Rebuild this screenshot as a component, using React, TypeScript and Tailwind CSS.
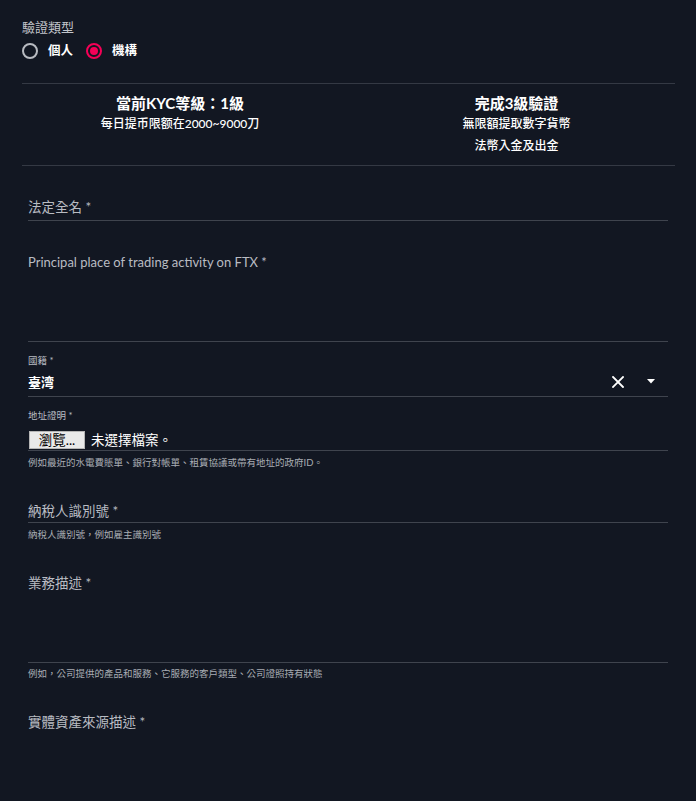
import React from "react";

const FONT = "font-['Lato','Noto_Sans_CJK_TC',sans-serif]";

function Radio({ checked, label }: { checked: boolean; label: string }) {
  return (
    <div className="flex items-center">
      <span
        className={
          "flex h-[16px] w-[16px] items-center justify-center rounded-full border-2 " +
          (checked ? "border-[#f50057]" : "border-[#b8bbc1]")
        }
      >
        {checked && <span className="h-[8px] w-[8px] rounded-full bg-[#f50057]" />}
      </span>
      <span className="ml-[10px] text-[12.5px] font-bold leading-[20px] text-white">{label}</span>
    </div>
  );
}

export default function App() {
  return (
    <div className={"min-h-[801px] w-[696px] bg-[#121722] pb-[60px] " + FONT}>
      {/* top section */}
      <div className="pl-[22px] pr-[21px] pt-[19px]">
        <div className="text-[13px] leading-[16px] text-[#c3c6cc]">驗證類型</div>
        <div className="mt-[6px] flex h-[20px] items-center gap-[13px]">
          <Radio checked={false} label="個人" />
          <Radio checked={true} label="機構" />
        </div>
        <div className="mt-[22px] border-t border-[#343944]" />
        <div className="flex items-start pb-[8px] pt-[10px] text-white">
          <div className="flex w-[316px] flex-col items-center">
            <div className="text-[15px] font-bold leading-[19px]">當前KYC等級：1級</div>
            <div className="text-[12px] font-medium leading-[22px]">每日提币限额在2000~9000刀</div>
          </div>
          <div className="flex flex-1 flex-col items-center pl-[20px]">
            <div className="text-[15px] font-bold leading-[19px]">完成3級驗證</div>
            <div className="text-[12px] font-medium leading-[22px]">無限額提取數字貨幣</div>
            <div className="text-[12px] font-medium leading-[22px]">法幣入金及出金</div>
          </div>
        </div>
        <div className="border-t border-[#343944]" />
      </div>

      {/* form */}
      <div className="mx-[28px]">
        <div className="mt-[31px] border-b border-[#3f444e] pb-[3px]">
          <div className="text-[13.5px] leading-[20px] text-[#b9bcc2]">法定全名 *</div>
        </div>

        <div className="mt-[31px] h-[90px] border-b border-[#3f444e]">
          <div className="text-[13px] leading-[20px] text-[#b9bcc2]">
            Principal place of trading activity on FTX *
          </div>
        </div>

        <div className="mt-[13px] text-[9.5px] leading-[12px] text-[#b9bcc2]">國籍 *</div>
        <div className="mt-[6px] box-border flex h-[24px] items-center border-b border-[#3f444e] pb-[6px] text-white">
          <div className="flex-1 text-[13px] font-bold leading-[18px]">臺湾</div>
          <svg width="12" height="12" viewBox="0 0 12 12" className="mr-[23px]">
            <path d="M1 1 L11 11 M11 1 L1 11" stroke="white" strokeWidth="1.8" strokeLinecap="square" />
          </svg>
          <svg width="8" height="5" viewBox="0 0 8 5" className="mr-[13px]">
            <path d="M0 0 L8 0 L4 4.5 Z" fill="white" />
          </svg>
        </div>

        <div className="mt-[13px] text-[9.5px] leading-[12px] text-[#b9bcc2]">地址證明 *</div>
        <div className="mt-[9px] flex h-[20px] items-start border-b border-[#3f444e]">
          <div className="ml-[1px] flex h-[18px] w-[56px] items-center justify-center border border-[#b5b5b5] bg-[#e9e9e9] text-[13.5px] leading-[16px] text-black">
            瀏覽...
          </div>
          <div className="ml-[6px] text-[13.5px] leading-[18px] text-white">未選擇檔案。</div>
        </div>
        <div className="mt-[6px] text-[9.5px] leading-[12px] text-[#a9adb4]">
          例如最近的水電費賬單、銀行對帳單、租賃協議或帶有地址的政府ID。
        </div>

        <div className="mt-[32px] border-b border-[#3f444e] pb-[1px]">
          <div className="text-[13.5px] leading-[20px] text-[#b9bcc2]">納稅人識別號 *</div>
        </div>
        <div className="mt-[6px] text-[9.5px] leading-[12px] text-[#a9adb4]">納稅人識別號，例如雇主識別號</div>

        <div className="mt-[32px] h-[90px] border-b border-[#3f444e]">
          <div className="text-[13.5px] leading-[20px] text-[#b9bcc2]">業務描述 *</div>
        </div>
        <div className="mt-[5px] text-[9.5px] leading-[12px] text-[#a9adb4]">
          例如，公司提供的產品和服務、它服務的客戶類型、公司證照持有狀態
        </div>

        <div className="mt-[32px] text-[13.5px] leading-[20px] text-[#b9bcc2]">實體資產來源描述 *</div>
      </div>
    </div>
  );
}
